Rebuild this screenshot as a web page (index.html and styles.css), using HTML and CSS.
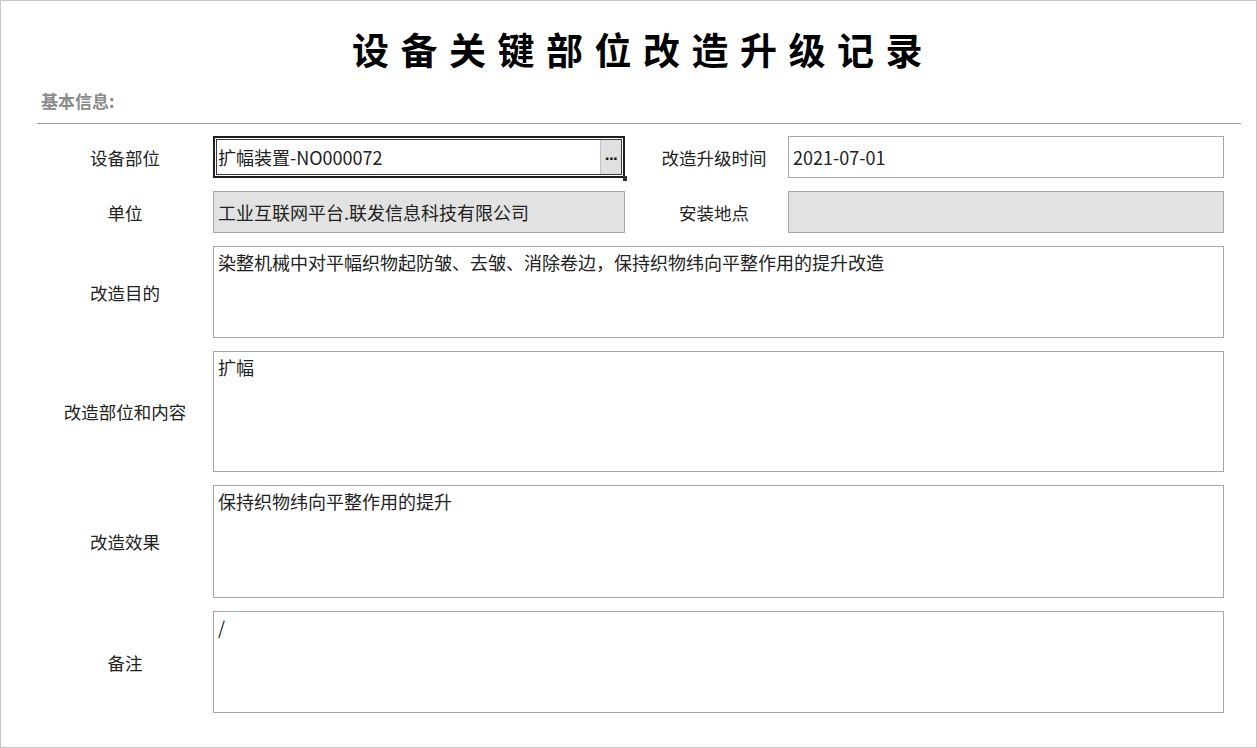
FILE: index.html
```html
<!DOCTYPE html>
<html lang="zh-CN">
<head>
<meta charset="utf-8">
<title>设备关键部位改造升级记录</title>
<link rel="stylesheet" href="styles.css">
</head>
<body>
<div class="page">
  <h1 class="title">设备关键部位改造升级记录</h1>
  <div class="section-head">基本信息:</div>
  <div class="form">
    <div class="label">设备部位</div>
    <div class="field focused">
      <span class="val">扩幅装置-NO000072</span>
      <span class="pick">...</span>
      <span class="grip"></span>
    </div>
    <div class="label label2">改造升级时间</div>
    <div class="field">2021-07-01</div>

    <div class="label">单位</div>
    <div class="field disabled">工业互联网平台.联发信息科技有限公司</div>
    <div class="label label2">安装地点</div>
    <div class="field disabled"></div>

    <div class="label">改造目的</div>
    <div class="field area wide">染整机械中对平幅织物起防皱、去皱、消除卷边，保持织物纬向平整作用的提升改造</div>

    <div class="label">改造部位和内容</div>
    <div class="field area wide">扩幅</div>

    <div class="label">改造效果</div>
    <div class="field area wide">保持织物纬向平整作用的提升</div>

    <div class="label">备注</div>
    <div class="field area wide">/</div>
  </div>
</div>
</body>
</html>
```

FILE: styles.css
```css
html, body {
  margin: 0;
  padding: 0;
  background: #ffffff;
}

body {
  font-family: "Noto Sans CJK SC", "Noto Sans", sans-serif;
  color: #222222;
}

.page {
  box-sizing: border-box;
  width: 1257px;
  height: 748px;
  border: 1px solid #c6c6c6;
  padding: 0 15px 0 36px;
}

.title {
  margin: 24px 0 0 0;
  padding-left: 8px;
  text-align: center;
  font-size: 37px;
  line-height: 48px;
  font-weight: 700;
  letter-spacing: 11.5px;
  color: #000000;
}

.section-head {
  margin-top: 16px;
  padding: 0 0 11px 4px;
  font-size: 17px;
  line-height: 23px;
  font-weight: 700;
  color: #8a8a8a;
  border-bottom: 1px solid #9a9a9a;
}

.form {
  display: grid;
  grid-template-columns: 176px 412px 163px 436px;
  grid-template-rows: 42px 42px 92px 121px 113px 102px;
  row-gap: 13px;
  margin-top: 12px;
}

.label {
  display: flex;
  align-items: center;
  justify-content: center;
  font-size: 17.5px;
  color: #222222;
}

.label2 {
  padding-left: 15px;
}

.field {
  position: relative;
  box-sizing: border-box;
  display: flex;
  align-items: center;
  border: 1px solid #a9a9a9;
  padding: 0 4px;
  font-size: 18px;
  color: #222222;
  background: #ffffff;
  white-space: nowrap;
}

.field.disabled {
  background: #e2e2e2;
}

.field.focused {
  border: 2px solid #1e1e1e;
  box-shadow: inset 0 0 0 1px #ffffff, inset 0 0 0 2px #3a3a3a;
  padding: 0 2px 0 3px;
}

.val {
  flex: 1;
}

.pick {
  align-self: stretch;
  width: 21px;
  margin: 2px 0;
  background: #e0e0e0;
  border-left: 1px solid #c2c2c2;
  display: flex;
  align-items: center;
  justify-content: center;
  font-family: "Liberation Sans", sans-serif;
  font-size: 17px;
  line-height: 17px;
  font-weight: 700;
  color: #111111;
  letter-spacing: -0.5px;
  padding-bottom: 6px;
  box-sizing: border-box;
}

.grip {
  position: absolute;
  right: -4px;
  bottom: -5px;
  width: 4px;
  height: 5px;
  background: #333333;
}

.field.area {
  align-items: flex-start;
  padding: 4px 4px;
  line-height: 22px;
  white-space: normal;
}

.wide {
  grid-column: 2 / 5;
}
```
